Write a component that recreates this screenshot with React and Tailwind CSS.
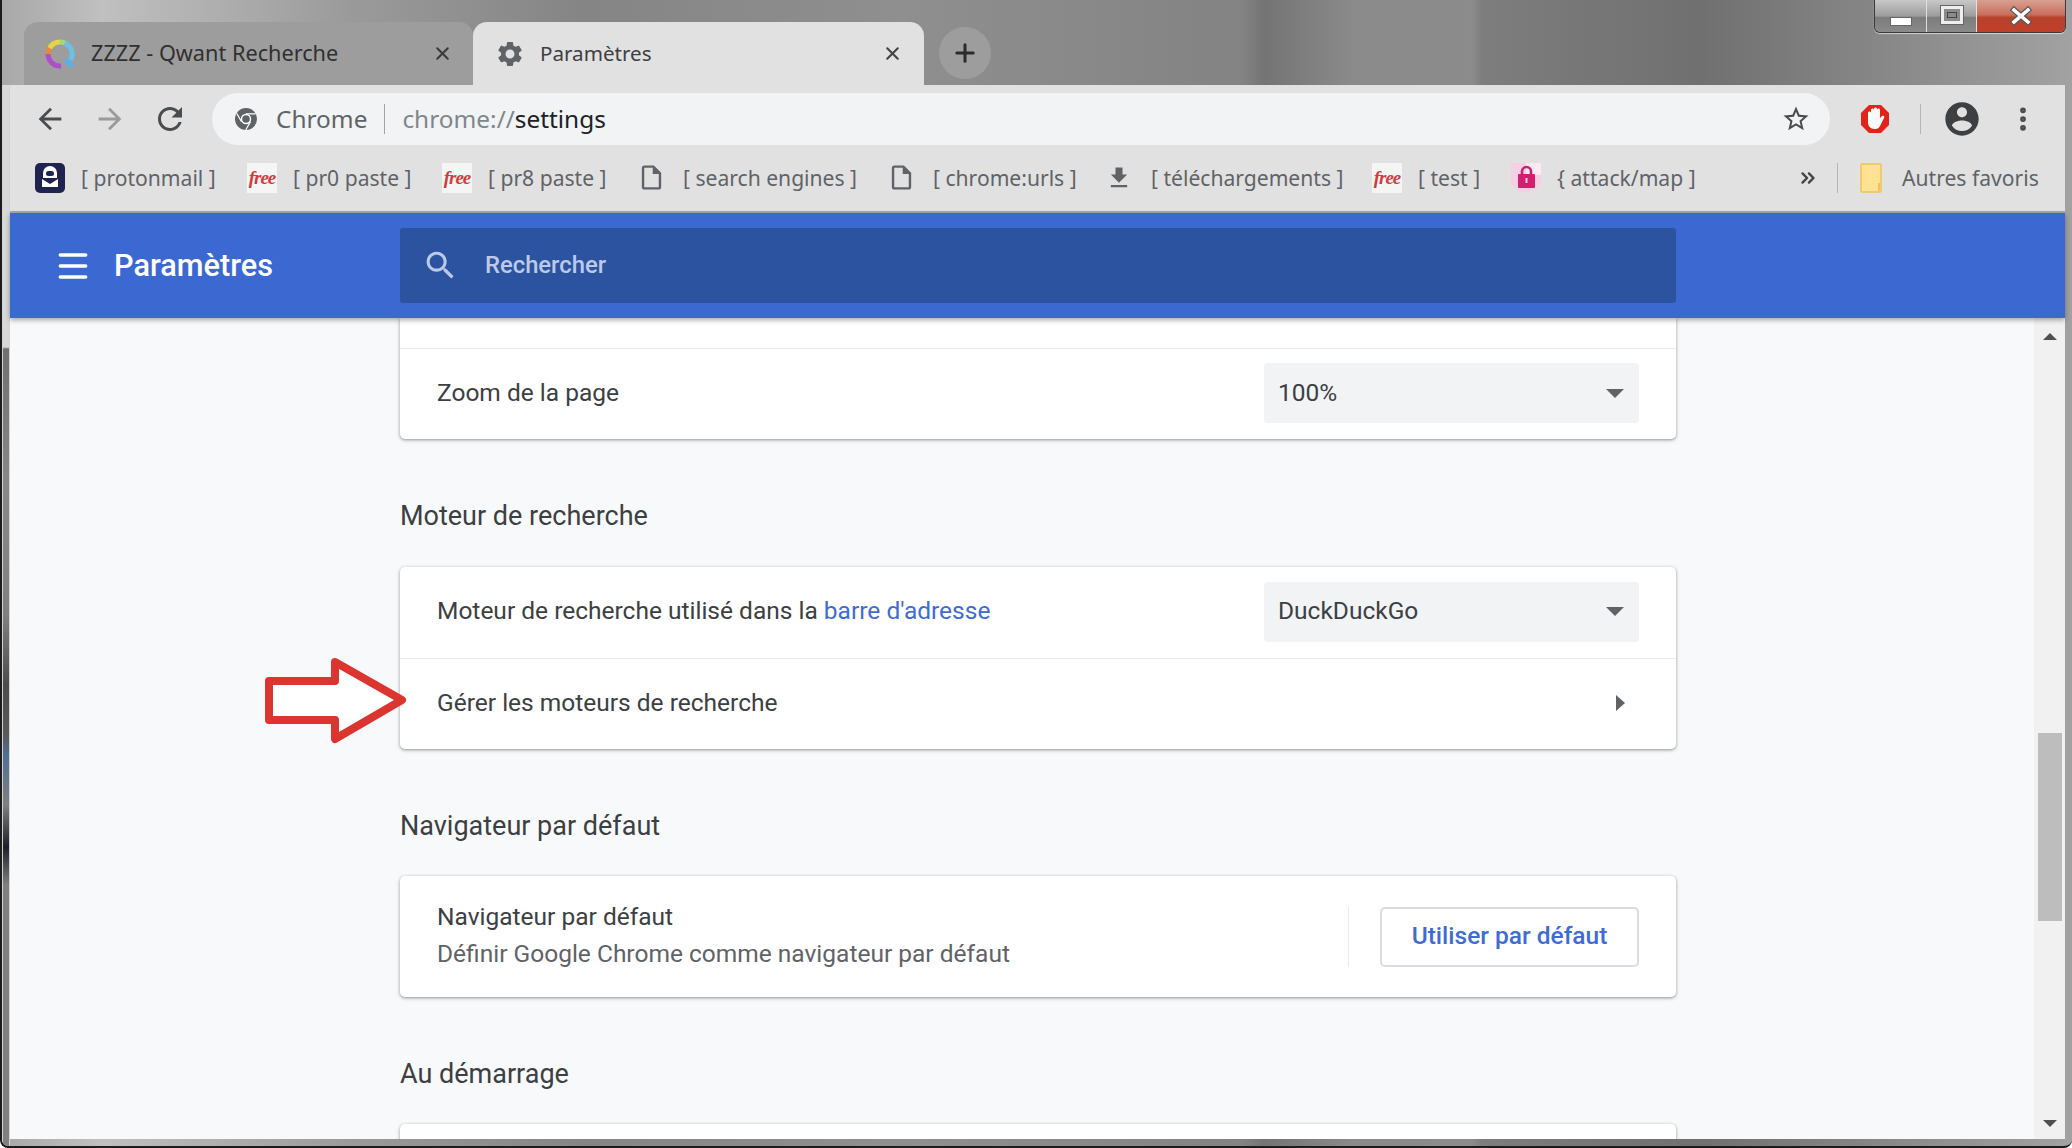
import { X, Plus, Menu, EllipsisVertical, ChevronsRight } from "lucide-react";

const uiFont = "font-['Noto_Sans',sans-serif]";
const pageFont = "font-['Roboto',sans-serif]";

const Mat = ({ d, className }) => (
  <svg viewBox="0 0 24 24" className={className} fill="currentColor">
    <path d={d} />
  </svg>
);

const GEAR =
  "M19.14 12.94c.04-.3.06-.61.06-.94 0-.32-.02-.64-.07-.94l2.03-1.58c.18-.14.23-.41.12-.61l-1.92-3.32c-.12-.22-.37-.29-.59-.22l-2.39.96c-.5-.38-1.03-.7-1.62-.94l-.36-2.54c-.04-.24-.24-.41-.48-.41h-3.84c-.24 0-.43.17-.47.41l-.36 2.54c-.59.24-1.13.57-1.62.94l-2.39-.96c-.22-.08-.47 0-.59.22L2.74 8.87c-.12.21-.08.47.12.61l2.03 1.58c-.05.3-.09.63-.09.94s.02.64.07.94l-2.03 1.58c-.18.14-.23.41-.12.61l1.92 3.32c.12.22.37.29.59.22l2.39-.96c.5.38 1.03.7 1.62.94l.36 2.54c.05.24.24.41.48.41h3.84c.24 0 .44-.17.47-.41l.36-2.54c.59-.24 1.13-.56 1.62-.94l2.39.96c.22.08.47 0 .59-.22l1.92-3.32c.12-.22.07-.47-.12-.61l-2.01-1.58zM12 15.6c-1.98 0-3.6-1.62-3.6-3.6s1.62-3.6 3.6-3.6 3.6 1.62 3.6 3.6-1.62 3.6-3.6 3.6z";
const BACK = "M20 11H7.83l5.59-5.59L12 4l-8 8 8 8 1.41-1.41L7.83 13H20v-2z";
const FORWARD = "M12 4l-1.41 1.41L16.17 11H4v2h12.17l-5.58 5.59L12 20l8-8z";
const RELOAD =
  "M17.65 6.35C16.2 4.9 14.21 4 12 4c-4.42 0-7.99 3.58-7.99 8s3.57 8 7.99 8c3.73 0 6.84-2.55 7.73-6h-2.08c-.82 2.33-3.04 4-5.65 4-3.31 0-6-2.69-6-6s2.69-6 6-6c1.66 0 3.14.69 4.22 1.78L13 11h7V4l-2.35 2.35z";
const SEARCH =
  "M15.5 14h-.79l-.28-.27C15.41 12.59 16 11.11 16 9.5 16 5.91 13.09 3 9.5 3S3 5.91 3 9.5 5.91 16 9.5 16c1.61 0 3.09-.59 4.23-1.57l.27.28v.79l5 4.99L20.49 19l-4.99-5zm-6 0C7.01 14 5 11.99 5 9.5S7.01 5 9.5 5 14 7.01 14 9.5 11.99 14 9.5 14z";
const STAR =
  "M22 9.24l-7.19-.62L12 2 9.19 8.63 2 9.24l5.46 4.73L5.82 21 12 17.27 18.18 21l-1.63-7.03L22 9.24zM12 15.4l-3.76 2.27 1-4.28-3.32-2.88 4.38-.38L12 6.1l1.71 4.04 4.38.38-3.32 2.88 1 4.28L12 15.4z";
const ACCOUNT =
  "M12 2C6.48 2 2 6.48 2 12s4.48 10 10 10 10-4.48 10-10S17.52 2 12 2zm0 3c1.66 0 3 1.34 3 3s-1.34 3-3 3-3-1.34-3-3 1.34-3 3-3zm0 14.2c-2.5 0-4.71-1.28-6-3.22.03-1.99 4-3.08 6-3.08 1.99 0 5.97 1.09 6 3.08-1.29 1.94-3.5 3.22-6 3.22z";
const DOWNLOAD = "M19 9h-4V3H9v6H5l7 7 7-7zM5 18v2h14v-2H5z";
const DOC =
  "M14 2H6c-1.1 0-2 .9-2 2v16c0 1.1.9 2 2 2h12c1.1 0 2-.9 2-2V8l-6-6zM6 20V4h7v5h5v11H6z";

const QwantIcon = () => (
  <svg viewBox="0 0 30 30" className="w-[30px] h-[30px] shrink-0" fill="none" strokeWidth="5">
    <path d="M3 15a12 12 0 0 1 1.6-6" stroke="#e88a3a" />
    <path d="M4.6 9A12 12 0 0 1 15 3" stroke="#e4d44a" />
    <path d="M15 3a12 12 0 0 1 5 1.1" stroke="#a8d67a" />
    <path d="M20 4.1A12 12 0 0 1 25.5 21" stroke="#6cc0e8" />
    <path d="M3 15a12 12 0 0 0 13 12" stroke="#b050c8" />
    <path d="M21 20l6 8" stroke="#5ab0e8" />
  </svg>
);

const ChromeIcon = () => (
  <svg viewBox="0 0 24 24" className="w-[24px] h-[24px] shrink-0">
    <circle cx="12" cy="12" r="11" fill="#5f6368" />
    <circle cx="12" cy="12" r="5.2" fill="#fff" />
    <circle cx="12" cy="12" r="3.8" fill="#5f6368" />
    <path d="M12 6.8h9.5M7.5 14.6L2.8 6.5M16.5 14.6l-4.8 8.4" stroke="#fff" strokeWidth="1.2" />
  </svg>
);

const ProtonIcon = () => (
  <svg viewBox="0 0 30 30" className="w-[30px] h-[30px] shrink-0">
    <rect width="30" height="30" rx="5" fill="#1f2350" />
    <path d="M8 10a7 7 0 0 1 14 0v5H8z" fill="#fff" />
    <rect x="11" y="8" width="8" height="5" rx="2.5" fill="#1f2350" />
    <path d="M7 16l8 5 8-5v8H7z" fill="#fff" />
  </svg>
);

const FreeIcon = () => (
  <span className="w-[30px] h-[30px] shrink-0 bg-[#f5f5f5] flex items-center justify-center font-['Liberation_Serif',serif] italic font-bold text-[#d43b3b] text-[19px] leading-none tracking-[-1px]">
    free
  </span>
);

const LockIcon = () => (
  <svg viewBox="0 0 30 30" className="w-[30px] h-[30px] shrink-0">
    <path d="M0 0h30v17c0 7-7 11-15 13C7 28 0 24 0 17z" fill="#f6cfe3" />
    <path d="M15 0h15v12H15z" fill="#fbeaf3" />
    <path d="M11 12V8.5a4.5 4.5 0 0 1 9 0V12" fill="none" stroke="#d21f70" strokeWidth="2.6" />
    <rect x="7" y="11" width="17" height="14" rx="1" fill="#d21f70" />
    <rect x="14.5" y="15" width="2" height="5" fill="#f6cfe3" />
  </svg>
);

const FolderIcon = () => (
  <svg viewBox="0 0 22 30" className="w-[22px] h-[30px] shrink-0">
    <rect x="1" y="1" width="20" height="28" rx="1" fill="#fde293" stroke="#eec45a" strokeWidth="1.5" />
    <path d="M19 20v8" stroke="#eec45a" strokeWidth="2" />
  </svg>
);

const HandIcon = () => (
  <svg viewBox="0 0 30 30" className="w-[30px] h-[30px] shrink-0">
    <path d="M9 1h12l8 8v12l-8 8H9l-8-8V9z" fill="#e2231a" />
    <path d="M8 9c0-2 3-2 3 0V6c0-2 3-2 3 0V5c0-2 3-2 3 0v1c0-2 3-2 3 0v8l2-2c2-1 3 1 2 2l-3 6c-1 3-3 5-6 5-5 0-7-3-7-7z" fill="#fafafa" />
  </svg>
);

const docIcon = <Mat d={DOC} className="w-[29px] h-[29px] text-[#5f6368]" />;

const bookmarks = [
  { label: "[ protonmail ]", icon: <ProtonIcon />, width: "w-[212px]" },
  { label: "[ pr0 paste ]", icon: <FreeIcon />, width: "w-[195px]" },
  { label: "[ pr8 paste ]", icon: <FreeIcon />, width: "w-[195px]" },
  { label: "[ search engines ]", icon: docIcon, width: "w-[250px]" },
  { label: "[ chrome:urls ]", icon: docIcon, width: "w-[218px]" },
  { label: "[ téléchargements ]", icon: <Mat d={DOWNLOAD} className="w-[28px] h-[28px] text-[#5f6368]" />, width: "w-[267px]" },
  { label: "[ test ]", icon: <FreeIcon />, width: "w-[139px]" },
  { label: "{ attack/map ]", icon: <LockIcon />, width: "w-[286px]" },
];

const Caret = () => (
  <span className="w-0 h-0 border-x-[9px] border-x-transparent border-t-[9px] border-t-[#5f6368]" />
);

const Select = ({ value }) => (
  <div className="w-[375px] h-[60px] rounded-[4px] bg-[#f1f3f4] flex items-center justify-between pl-[14px] pr-[15px] text-[#3c4043]">
    <span>{value}</span>
    <Caret />
  </div>
);

const Heading = ({ children, className = "h-[127px]" }) => (
  <div className={`${className} pt-[62px] leading-[30px] text-[27px] text-[#3c4043]`}>{children}</div>
);

const Card = ({ className = "", children }) => (
  <div className={`bg-white rounded-[5px] shadow-[0_1px_3px_rgba(60,64,67,0.45),0_1px_5px_rgba(60,64,67,0.15)] ${className}`}>
    {children}
  </div>
);

const Row = ({ children, divider }) => (
  <div className={`h-[91px] px-[37px] pb-[2px] flex items-center justify-between ${divider ? "border-t border-[#e8eaed]" : ""}`}>
    {children}
  </div>
);

export default function App() {
  return (
    <div className="relative w-[2072px] h-[1148px] overflow-hidden flex flex-col pl-[8px] pr-[7px] pb-[7px] rounded-b-[8px] bg-[linear-gradient(90deg,#a8a8a8_0px,#c0c0c0_100px,#9a9a9a_350px,#858585_580px,#8f8f8f_900px,#838383_1240px,#747474_1262px,#8a8a8a_1350px,#8c8c8c_1470px,#7d7d7d_1480px,#707070_1700px,#8a8a8a_1900px,#a2a2a2_2072px)] border-l-2 border-b-2 border-[#1c1c1c]">
      {/* left window frame */}
      <div className="absolute left-0 top-[85px] bottom-0 w-[8px] border-l border-r border-[#d4d4d4] bg-[linear-gradient(180deg,#d8d8d8_0px,#d8d8d8_262px,#707070_264px,#888888_400px,#808080_530px,#4c4c4c_600px,#5a5a5a_650px,#4f6f96_670px,#808080_720px,#1e2028_762px,#808080_800px)]" />

      {/* tabs */}
      <div className={`h-[85px] shrink-0 flex items-end pl-[14px] ${uiFont}`}>
        <div className="w-[449px] h-[63px] bg-[#9d9d9d] rounded-t-[14px] flex items-center pl-[21px] pr-[20px] text-[#303030] text-[21.7px]">
          <QwantIcon />
          <span className="ml-[16px] truncate">ZZZZ - Qwant Recherche</span>
          <X className="ml-auto w-[21px] h-[21px] text-[#3c3c3c]" strokeWidth={2.4} />
        </div>
        <div className="w-[451px] h-[63px] bg-[#e1e1e1] rounded-t-[14px] flex items-center pl-[22px] pr-[21px] text-[#3c4043] text-[20.6px]">
          <Mat d={GEAR} className="w-[30px] h-[30px] text-[#5f6368]" />
          <span className="ml-[15px]">Paramètres</span>
          <X className="ml-auto w-[21px] h-[21px] text-[#444]" strokeWidth={2.4} />
        </div>
        <div className="ml-[15px] mb-[6px] w-[52px] h-[52px] rounded-full bg-[#9d9d9d] flex items-center justify-center">
          <Plus className="w-[28px] h-[28px] text-[#2b2b2b]" strokeWidth={2.6} />
        </div>
      </div>

      {/* toolbar */}
      <div className="shrink-0 bg-[#e1e1e1] border-b-2 border-[#a8a8a8]">
        <div className="h-[60px] pt-[8px] flex items-center pl-[10px] text-[#4a4d50]">
          <div className="w-[60px] flex justify-center"><Mat d={BACK} className="w-[34px] h-[34px]" /></div>
          <div className="w-[60px] flex justify-center"><Mat d={FORWARD} className="w-[34px] h-[34px] text-[#9a9a9a]" /></div>
          <div className="w-[60px] flex justify-center"><Mat d={RELOAD} className="w-[36px] h-[36px]" /></div>
          <div className={`ml-[12px] w-[1618px] h-[52px] rounded-full bg-[#f1f3f4] flex items-center pl-[22px] pr-[19px] ${uiFont} text-[24.4px]`}>
            <ChromeIcon />
            <span className="ml-[18px] text-[#5f6368]">Chrome</span>
            <span className="mx-[17px] w-px h-[30px] bg-[#a0a3a6]" />
            <span className="text-[#80868b]">chrome://<span className="text-[#202124]">settings</span></span>
            <Mat d={STAR} className="ml-auto w-[30px] h-[30px] text-[#4a4d50]" />
          </div>
          <div className="ml-[30px]"><HandIcon /></div>
          <span className="ml-[30px] w-px h-[30px] bg-[#b5b5b5]" />
          <Mat d={ACCOUNT} className="ml-[21px] w-[40px] h-[40px] text-[#3c4043]" />
          <EllipsisVertical className="ml-[26px] w-[30px] h-[30px] text-[#4a4d50]" strokeWidth={2.6} />
        </div>
        <div className={`h-[66px] pl-[25px] flex items-center ${uiFont} text-[21.1px] text-[#5f6368]`}>
          {bookmarks.map((b) => (
            <div key={b.label} className={`flex items-center shrink-0 whitespace-nowrap ${b.width}`}>
              <div className="w-[46px] shrink-0">{b.icon}</div>
              <span>{b.label}</span>
            </div>
          ))}
          <ChevronsRight className="w-[22px] h-[22px] text-[#444]" strokeWidth={2.6} />
          <span className="ml-[18px] w-px h-[30px] bg-[#b5b5b5]" />
          <div className="ml-[22px] flex items-center gap-[20px] whitespace-nowrap">
            <FolderIcon />
            <span>Autres favoris</span>
          </div>
        </div>
      </div>

      {/* settings header */}
      <div className={`relative z-10 h-[105px] shrink-0 bg-[#3c69d1] shadow-[0_2px_5px_rgba(0,0,0,0.35)] flex items-center ${pageFont}`}>
        <Menu className="ml-[44px] w-[38px] h-[38px] text-white" strokeWidth={2.2} />
        <span className="ml-[22px] w-[286px] pt-[2px] text-[30.7px] font-medium text-white">Paramètres</span>
        <div className="w-[1276px] h-[75px] rounded-[3px] bg-[#2c53a0] flex items-center pl-[22px] text-[#bccaea]">
          <Mat d={SEARCH} className="w-[37px] h-[37px]" />
          <span className="ml-[26px] text-[23.8px] font-medium">Rechercher</span>
        </div>
      </div>

      {/* page body */}
      <div className={`flex-1 min-h-0 flex bg-[#f8f9fa] overflow-hidden ${pageFont} text-[24.5px] text-[#3c4043]`}>
        <div className="flex-1 pl-[390px]">
          <div className="w-[1276px]">
            <Card className="rounded-t-none">
              <div className="h-[30px]" />
              <Row divider>
                <span>Zoom de la page</span>
                <Select value="100%" />
              </Row>
            </Card>
            <Heading className="h-[128px]">Moteur de recherche</Heading>
            <Card>
              <Row>
                <span>
                  Moteur de recherche utilisé dans la <span className="text-[#3f6bd6]">barre d'adresse</span>
                </span>
                <Select value="DuckDuckGo" />
              </Row>
              <Row divider>
                <span>Gérer les moteurs de recherche</span>
                <span className="mr-[14px] w-0 h-0 border-y-[8px] border-y-transparent border-l-[9px] border-l-[#5f6368]" />
              </Row>
            </Card>
            <Heading>Navigateur par défaut</Heading>
            <Card className="h-[121px] px-[37px] flex items-center">
              <div className="flex flex-col gap-[6px] pb-[4px] leading-[31px]">
                <span>Navigateur par défaut</span>
                <span className="text-[#5f6368]">Définir Google Chrome comme navigateur par défaut</span>
              </div>
              <span className="ml-auto w-px h-[60px] bg-[#e8eaed]" />
              <div className="ml-[31px] w-[259px] h-[60px] rounded-[5px] border-2 border-[#dadce0] bg-white flex items-center justify-center font-medium text-[#3f6bd6]">
                Utiliser par défaut
              </div>
            </Card>
            <Heading>Au démarrage</Heading>
            <Card className="h-[60px]" />
          </div>
        </div>
        {/* scrollbar */}
        <div className="w-[31px] shrink-0 bg-[#f1f1f1] flex flex-col items-center">
          <span className="mt-[15px] w-0 h-0 border-x-[7px] border-x-transparent border-b-[7px] border-b-[#505050]" />
          <div className="mt-[393px] w-[24px] h-[188px] bg-[#bdbdbd]" />
          <span className="mt-auto mb-[12px] w-0 h-0 border-x-[7px] border-x-transparent border-t-[7px] border-t-[#505050]" />
        </div>
      </div>

      {/* window controls */}
      <div className="absolute top-0 right-[6px] w-[192px] h-[33px] flex rounded-b-[6px] overflow-hidden border border-t-0 border-[#3a3a3a] shadow-[0_1px_1px_rgba(255,255,255,0.6)]">
        <div className="w-[52px] border-r border-[#e0e0e0] bg-[linear-gradient(180deg,#c8c8c8,#9c9c9c_50%,#7c7c7c_55%,#8a8a8a)] flex items-end justify-center pb-[6px]">
          <span className="w-[22px] h-[9px] bg-white border border-[#666]" />
        </div>
        <div className="w-[50px] border-r border-[#e0e0e0] bg-[linear-gradient(180deg,#c8c8c8,#9c9c9c_50%,#7c7c7c_55%,#8a8a8a)] flex items-start justify-center pt-[6px]">
          <span className="w-[22px] h-[18px] border-[3px] border-[#eeeeee] bg-[#8a8a8a] outline outline-[#666] flex items-center justify-center">
            <span className="w-[10px] h-[6px] border border-[#444]" />
          </span>
        </div>
        <div className="flex-1 bg-[linear-gradient(180deg,#d9a090,#c97060_45%,#b8412c_55%,#c0402a)] flex items-center justify-center">
          <svg viewBox="0 0 24 20" className="w-[24px] h-[20px]" fill="none" strokeLinecap="square">
            <path d="M5 4l14 12M19 4L5 16" stroke="#555" strokeWidth="6" />
            <path d="M5 4l14 12M19 4L5 16" stroke="#fff" strokeWidth="3.6" />
          </svg>
        </div>
      </div>

      {/* annotation arrow */}
      <svg className="absolute left-[263px] top-[658px] w-[146px] h-[86px]" viewBox="0 0 146 86">
        <path d="M4 23H70V4L137 42 70 81V62H4Z" fill="#fff" stroke="#dc3530" strokeWidth="8" strokeLinejoin="round" />
      </svg>
    </div>
  );
}
